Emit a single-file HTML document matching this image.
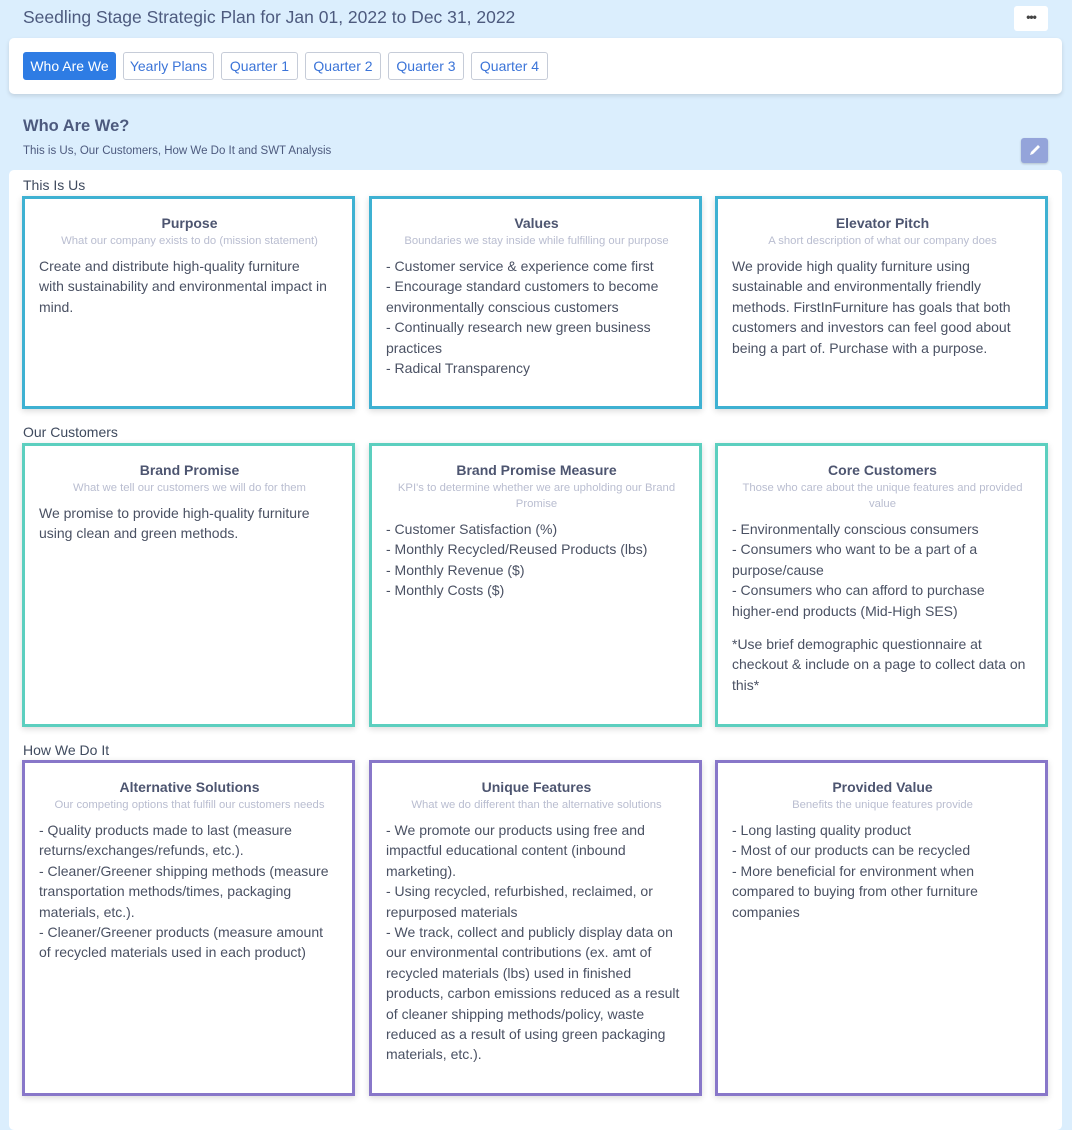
<!DOCTYPE html>
<html><head><style>
*{box-sizing:border-box;margin:0;padding:0}
body{width:1072px;height:1115px;overflow:hidden;background:#dbeefd;font-family:"Liberation Sans",sans-serif;color:#4a5570;position:relative}
.abs{position:absolute}
.h1{left:23px;top:7px;font-size:17.5px;color:#4d5a7e;white-space:nowrap}
.dots{left:1014px;top:6px;width:34px;height:25px;background:#fff;border-radius:3px;text-align:center;font-size:12px;line-height:22px;color:#444;font-weight:bold;letter-spacing:-1px}
.nav{left:9px;top:38px;width:1053px;height:56px;background:#fff;border-radius:5px;box-shadow:0 2px 4px rgba(0,0,0,.12)}
.tab{position:absolute;top:14px;height:28px;border:1px solid #c6ccd8;border-radius:3px;color:#3b74d8;font-size:14px;line-height:26px;text-align:center;background:#fff}
.tab.on{background:#2e7ce4;color:#fff;border-color:#2e7ce4}
.h2{left:23px;top:117px;font-size:16.5px;color:#4d5a7e;font-weight:bold}
.sub{left:23px;top:145px;font-size:11.5px;color:#4d5a7e}
.pen{left:1021px;top:138px;width:27px;height:25px;background:#94a4da;border-radius:3px;box-shadow:0 1px 2px rgba(0,0,0,.2)}
.panel{left:9px;top:170px;width:1053px;height:960px;background:#fff;border-radius:5px}
.sec{position:absolute;left:23px;font-size:14px;color:#3f4a5e}
.box{position:absolute;width:333px;border:3px solid;background:#fff;box-shadow:0 2px 6px rgba(0,0,0,.15);padding:15px 12px 0 14px}
.b{border-color:#3eb1d2}.t{border-color:#5ccfbf}.p{border-color:#8877c9}
.box h3{text-align:center;font-size:14px;color:#4d5570;font-weight:bold;line-height:20px;margin-top:-1px}
.box .s{text-align:center;font-size:11.3px;color:#b9bdd0;line-height:16px;margin-bottom:7px}
.box .c{font-size:14px;line-height:20.4px;color:#4a5163;white-space:nowrap}
</style></head><body>
<div class="abs h1">Seedling Stage Strategic Plan for Jan 01, 2022 to Dec 31, 2022</div>
<div class="abs dots">•••</div>
<div class="abs nav">
<div class="tab on" style="left:14px;width:93px">Who Are We</div>
<div class="tab" style="left:114px;width:91px">Yearly Plans</div>
<div class="tab" style="left:212px;width:77px">Quarter 1</div>
<div class="tab" style="left:296px;width:76px">Quarter 2</div>
<div class="tab" style="left:379px;width:76px">Quarter 3</div>
<div class="tab" style="left:462px;width:77px">Quarter 4</div>
</div>
<div class="abs h2">Who Are We?</div>
<div class="abs sub">This is Us, Our Customers, How We Do It and SWT Analysis</div>
<div class="abs pen"><svg width="27" height="25" viewBox="0 0 27 25"><path d="M9 17l1-3 7-7 2 2-7 7z" fill="#fff"/></svg></div>
<div class="abs panel"></div>

<div class="sec" style="top:177px">This Is Us</div>
<div class="box b" style="left:22px;top:196px;height:213px"><h3>Purpose</h3><div class="s">What our company exists to do (mission statement)</div><div class="c">Create and distribute high-quality furniture<br>with sustainability and environmental impact in<br>mind.</div></div>
<div class="box b" style="left:369px;top:196px;height:213px"><h3>Values</h3><div class="s">Boundaries we stay inside while fulfilling our purpose</div><div class="c">- Customer service &amp; experience come first<br>- Encourage standard customers to become<br>environmentally conscious customers<br>- Continually research new green business<br>practices<br>- Radical Transparency</div></div>
<div class="box b" style="left:715px;top:196px;height:213px"><h3>Elevator Pitch</h3><div class="s">A short description of what our company does</div><div class="c">We provide high quality furniture using<br>sustainable and environmentally friendly<br>methods. FirstInFurniture has goals that both<br>customers and investors can feel good about<br>being a part of. Purchase with a purpose.</div></div>

<div class="sec" style="top:424px">Our Customers</div>
<div class="box t" style="left:22px;top:443px;height:284px"><h3>Brand Promise</h3><div class="s">What we tell our customers we will do for them</div><div class="c">We promise to provide high-quality furniture<br>using clean and green methods.</div></div>
<div class="box t" style="left:369px;top:443px;height:284px"><h3>Brand Promise Measure</h3><div class="s">KPI's to determine whether we are upholding our Brand<br>Promise</div><div class="c">- Customer Satisfaction (%)<br>- Monthly Recycled/Reused Products (lbs)<br>- Monthly Revenue ($)<br>- Monthly Costs ($)</div></div>
<div class="box t" style="left:715px;top:443px;height:284px"><h3>Core Customers</h3><div class="s">Those who care about the unique features and provided<br>value</div><div class="c">- Environmentally conscious consumers<br>- Consumers who want to be a part of a<br>purpose/cause<br>- Consumers who can afford to purchase<br>higher-end products (Mid-High SES)<br><div style="height:13px"></div>*Use brief demographic questionnaire at<br>checkout &amp; include on a page to collect data on<br>this*</div></div>

<div class="sec" style="top:742px">How We Do It</div>
<div class="box p" style="left:22px;top:760px;height:336px"><h3>Alternative Solutions</h3><div class="s">Our competing options that fulfill our customers needs</div><div class="c">- Quality products made to last (measure<br>returns/exchanges/refunds, etc.).<br>- Cleaner/Greener shipping methods (measure<br>transportation methods/times, packaging<br>materials, etc.).<br>- Cleaner/Greener products (measure amount<br>of recycled materials used in each product)</div></div>
<div class="box p" style="left:369px;top:760px;height:336px"><h3>Unique Features</h3><div class="s">What we do different than the alternative solutions</div><div class="c">- We promote our products using free and<br>impactful educational content (inbound<br>marketing).<br>- Using recycled, refurbished, reclaimed, or<br>repurposed materials<br>- We track, collect and publicly display data on<br>our environmental contributions (ex. amt of<br>recycled materials (lbs) used in finished<br>products, carbon emissions reduced as a result<br>of cleaner shipping methods/policy, waste<br>reduced as a result of using green packaging<br>materials, etc.).</div></div>
<div class="box p" style="left:715px;top:760px;height:336px"><h3>Provided Value</h3><div class="s">Benefits the unique features provide</div><div class="c">- Long lasting quality product<br>- Most of our products can be recycled<br>- More beneficial for environment when<br>compared to buying from other furniture<br>companies</div></div>
</body></html>
